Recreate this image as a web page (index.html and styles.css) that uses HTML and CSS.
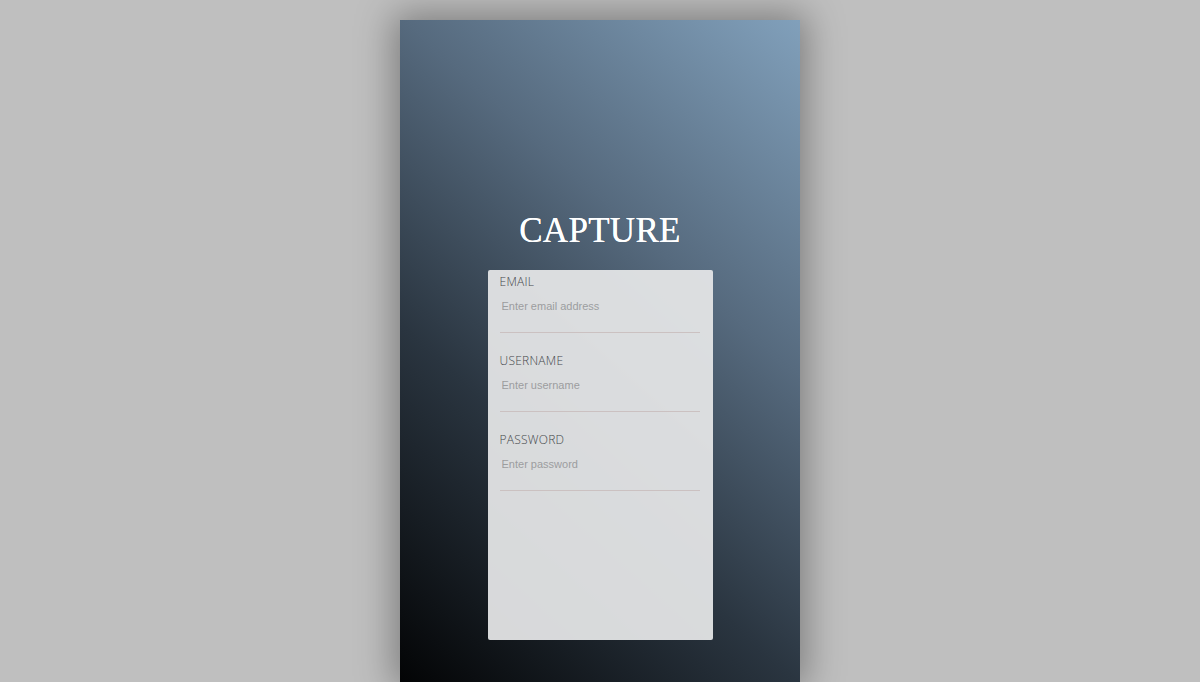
FILE: index.html
```html
<!DOCTYPE html>
<html>
<head>
<meta charset="utf-8">
<link rel="stylesheet" href="styles.css">
</head>
<body>
<div class="phone">
  <h1 class="title">CAPTURE</h1>
  <form class="card">
    <div class="field">
      <label class="label">EMAIL</label>
      <input class="input" type="text" placeholder="Enter email address">
    </div>
    <div class="field">
      <label class="label">USERNAME</label>
      <input class="input" type="text" placeholder="Enter username">
    </div>
    <div class="field">
      <label class="label">PASSWORD</label>
      <input class="input" type="password" placeholder="Enter password">
    </div>
  </form>
</div>
</body>
</html>
```

FILE: styles.css
```css
html, body {
  margin: 0;
  padding: 0;
  height: 100%;
  overflow: hidden;
}
body {
  background: #bfbfbf;
}
.phone {
  width: 400px;
  height: 662px;
  margin: 20px auto 0;
  background: linear-gradient(42deg, #030405 0%, #2a3540 35%, #566a7e 65%, #81a0bb 100%);
  box-shadow: 0 0 35px 6px rgba(0, 0, 0, 0.35);
  display: flex;
  flex-direction: column;
  align-items: center;
  padding-top: 191px;
  box-sizing: border-box;
}
.title {
  margin: 0 0 19px;
  font-family: "Liberation Serif", "DejaVu Serif", serif;
  font-weight: normal;
  font-size: 35px;
  line-height: 40px;
  color: #ffffff;
  letter-spacing: 0.3px;
  text-shadow: 0 0 0.6px #fff;
}
.card {
  width: 225px;
  height: 370px;
  box-sizing: border-box;
  padding: 4px 12px 0 12px;
  background: rgba(228, 229, 231, 0.94);
  border-radius: 2px;
  margin: 0;
}
.field {
  display: flex;
  flex-direction: column;
  margin-bottom: 20px;
}
.label {
  font-family: "Open Sans", sans-serif;
  font-size: 12px;
  line-height: 16px;
  color: #45484b;
  font-weight: 300;
  letter-spacing: 0.25px;
}
.input {
  display: block;
  width: 200px;
  box-sizing: border-box;
  margin: 0;
  padding: 10px 2px 19px;
  font-family: "Liberation Sans", Arial, sans-serif;
  font-size: 11px;
  line-height: 13px;
  border: none;
  border-bottom: 1px solid #cbc1c1;
  background: transparent;
  outline: none;
  color: #444;
}
.input::placeholder {
  color: #9c9d9f;
}
```
